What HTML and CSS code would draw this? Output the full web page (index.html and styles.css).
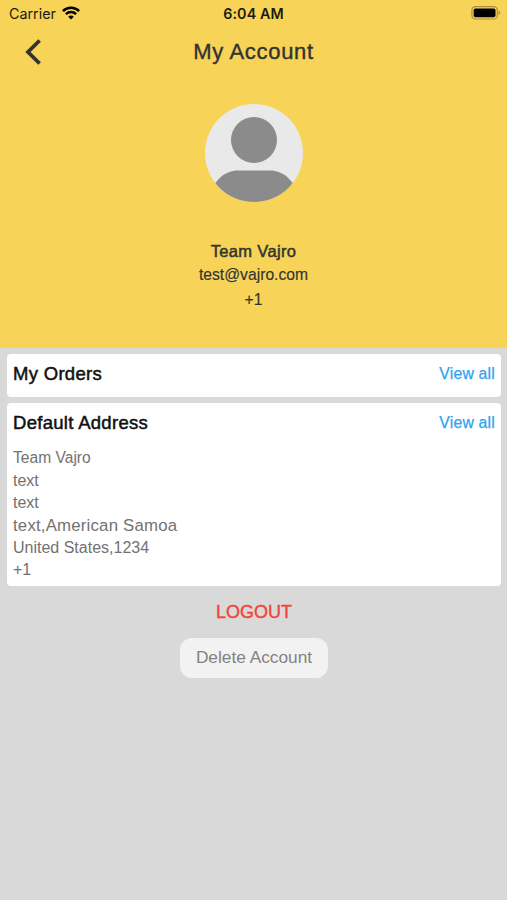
FILE: index.html
```
<!DOCTYPE html>
<html lang="en">
<head>
    <meta charset="UTF-8">
    <meta name="viewport" content="width=device-width, initial-scale=1.0">
    <title>My Account</title>
    <link rel="stylesheet" href="styles.css">
</head>
<body>
    <header class="profile">
        <div class="status-bar">
            <div class="carrier">
                <span>Carrier</span>
                <svg class="wifi" width="18" height="14" viewBox="0 0 18 14" fill="none" stroke="#000" stroke-width="2.5">
                    <path d="M0.9 5.1C5.4 0.6 12.6 0.6 17.1 5.1"/>
                    <path d="M3.9 8.2C6.8 5.4 11.2 5.4 14.1 8.2"/>
                    <path d="M9 13.5L6.2 10.7C7.8 9.2 10.2 9.2 11.8 10.7Z" fill="#000" stroke="none"/>
                </svg>
            </div>
            <div class="time">6:04 AM</div>
            <svg class="battery" width="30" height="14" viewBox="0 0 30 14">
                <rect x="0.9" y="0.6" width="25.4" height="12.4" rx="3.6" fill="none" stroke="#a98f3c" stroke-width="1.2"/>
                <rect x="2.7" y="2.4" width="21.8" height="8.8" rx="1.8" fill="#000"/>
                <path d="M27.6 4.6C29.8 5.4 29.8 8.2 27.6 9Z" fill="#a98f3c"/>
            </svg>
        </div>

        <div class="title-bar">
            <svg class="back" width="18" height="26" viewBox="0 0 18 26" fill="none" stroke="#333331" stroke-width="3.8">
                <path d="M15.6 1.5L4 13L15.6 24.5"/>
            </svg>
            <h1>My Account</h1>
        </div>

        <svg class="avatar" width="98" height="98" viewBox="0 0 98 98">
            <clipPath id="circle"><circle cx="49" cy="49" r="49"/></clipPath>
            <g clip-path="url(#circle)">
                <rect width="98" height="98" fill="#e9e9e9"/>
                <circle cx="49" cy="36" r="23" fill="#8b8b8b"/>
                <path d="M6 98V90C9 76 20 66.5 33 66.5H65C78 66.5 89 76 92 90V98Z" fill="#8b8b8b"/>
            </g>
        </svg>

        <div class="user-name">Team Vajro</div>
        <div class="user-info">test@vajro.com</div>
        <div class="user-info">+1</div>
    </header>

    <main class="content">
        <section class="card">
            <div class="card-header">
                <h2>My Orders</h2>
                <a class="view-all">View all</a>
            </div>
        </section>

        <section class="card">
            <div class="card-header">
                <h2>Default Address</h2>
                <a class="view-all">View all</a>
            </div>
            <div class="address">
                <div class="address-name">Team Vajro</div>
                <div>text</div>
                <div>text</div>
                <div class="address-region">text,American Samoa</div>
                <div>United States,1234</div>
                <div>+1</div>
            </div>
        </section>

        <button class="logout">LOGOUT</button>
        <button class="delete">Delete Account</button>
    </main>
</body>
</html>
```

FILE: styles.css
```
* {
    box-sizing: border-box;
}
body {
    margin: 0;
    min-height: 900px;
    font-family: "Liberation Sans", Arial, sans-serif;
    background-color: #d9d9d9;
}
h1, h2 {
    margin: 0;
    font-weight: normal;
}
.profile {
    height: 348px;
    display: flex;
    flex-direction: column;
    align-items: center;
    background-color: #f7d358;
    color: #333331;
}
.status-bar {
    width: 100%;
    height: 27px;
    padding: 0 6px 0 9px;
    display: grid;
    grid-template-columns: 1fr auto 1fr;
    align-items: center;
    font-family: Inter, sans-serif;
    font-size: 14.3px;
    color: #1c1a10;
}
.carrier {
    display: flex;
    align-items: center;
    gap: 6px;
}
.wifi {
    margin-top: -2px;
}
.time {
    margin-right: 3px;
    font-weight: 600;
    letter-spacing: 0.1px;
}
.battery {
    justify-self: end;
    margin-top: -1px;
}
.title-bar {
    width: 100%;
    height: 50px;
    padding: 0 24px;
    display: grid;
    grid-template-columns: 1fr auto 1fr;
    align-items: center;
}
.title-bar h1 {
    font-size: 22px;
    letter-spacing: 0.7px;
    -webkit-text-stroke: 0.4px;
}
.avatar {
    margin-top: 26.5px;
}
.user-name {
    margin-top: 37.5px;
    font-size: 16.5px;
    letter-spacing: 0.35px;
    line-height: 24px;
    -webkit-text-stroke: 0.5px;
}
.user-info {
    font-size: 15.7px;
    line-height: 24.5px;
    -webkit-text-stroke: 0.15px;
}
.content {
    padding: 6px 6px 0 7px;
    display: flex;
    flex-direction: column;
    align-items: center;
}
.card {
    width: 100%;
    margin-bottom: 6px;
    padding: 0 6px;
    border-radius: 4px;
    background-color: #fff;
}
.card-header {
    height: 43px;
    padding-bottom: 4px;
    display: flex;
    justify-content: space-between;
    align-items: center;
}
.card-header h2 {
    font-size: 18.5px;
    letter-spacing: 0.3px;
    color: #111;
    -webkit-text-stroke: 0.5px;
}
.view-all {
    font-size: 15.8px;
    letter-spacing: 0.2px;
    color: #2ea3f0;
    -webkit-text-stroke: 0.25px;
}
.address {
    padding: 1px 0 4px;
    font-size: 16px;
    line-height: 22.5px;
    color: #727272;
}
.address-name {
    font-size: 15.6px;
}
.address-region {
    font-size: 16.8px;
    letter-spacing: 0.2px;
    line-height: 22px;
}
button {
    border: none;
    font-family: inherit;
    cursor: pointer;
}
.logout {
    height: 40px;
    margin-top: 1px;
    padding: 0;
    background: none;
    font-size: 18px;
    color: #f44336;
    -webkit-text-stroke: 0.4px;
}
.delete {
    width: 148px;
    height: 40px;
    margin-top: 5px;
    padding: 0;
    border-radius: 12px;
    background-color: #f2f2f2;
    font-size: 17.3px;
    color: #828282;
}
```
